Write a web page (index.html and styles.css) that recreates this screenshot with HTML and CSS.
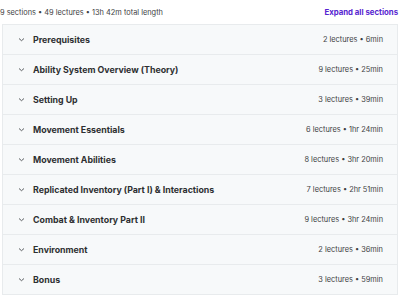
FILE: index.html
```html
<!DOCTYPE html>
<html lang="en">
<head>
    <meta charset="UTF-8">
    <title>Course content</title>
    <link rel="stylesheet" href="styles.css">
</head>
<body>
    <div class="curriculum">
        <div class="curriculum-header">
            <span class="summary">9 sections • 49 lectures • 13h 42m total length</span>
            <button class="expand-btn">Expand all sections</button>
        </div>

        <div class="sections">
            <div class="section">
                <svg class="chevron" viewBox="0 0 7 7"><path d="M1 2.5 3.5 4.7 6 2.5"/></svg>
                <span class="title">Prerequisites</span>
                <span class="meta">2 lectures • 6min</span>
            </div>
            <div class="section">
                <svg class="chevron" viewBox="0 0 7 7"><path d="M1 2.5 3.5 4.7 6 2.5"/></svg>
                <span class="title">Ability System Overview (Theory)</span>
                <span class="meta">9 lectures • 25min</span>
            </div>
            <div class="section">
                <svg class="chevron" viewBox="0 0 7 7"><path d="M1 2.5 3.5 4.7 6 2.5"/></svg>
                <span class="title">Setting Up</span>
                <span class="meta">3 lectures • 39min</span>
            </div>
            <div class="section">
                <svg class="chevron" viewBox="0 0 7 7"><path d="M1 2.5 3.5 4.7 6 2.5"/></svg>
                <span class="title">Movement Essentials</span>
                <span class="meta">6 lectures • 1hr 24min</span>
            </div>
            <div class="section">
                <svg class="chevron" viewBox="0 0 7 7"><path d="M1 2.5 3.5 4.7 6 2.5"/></svg>
                <span class="title">Movement Abilities</span>
                <span class="meta">8 lectures • 3hr 20min</span>
            </div>
            <div class="section">
                <svg class="chevron" viewBox="0 0 7 7"><path d="M1 2.5 3.5 4.7 6 2.5"/></svg>
                <span class="title">Replicated Inventory (Part I) &amp; Interactions</span>
                <span class="meta">7 lectures • 2hr 51min</span>
            </div>
            <div class="section">
                <svg class="chevron" viewBox="0 0 7 7"><path d="M1 2.5 3.5 4.7 6 2.5"/></svg>
                <span class="title">Combat &amp; Inventory Part II</span>
                <span class="meta">9 lectures • 3hr 24min</span>
            </div>
            <div class="section">
                <svg class="chevron" viewBox="0 0 7 7"><path d="M1 2.5 3.5 4.7 6 2.5"/></svg>
                <span class="title">Environment</span>
                <span class="meta">2 lectures • 36min</span>
            </div>
            <div class="section">
                <svg class="chevron" viewBox="0 0 7 7"><path d="M1 2.5 3.5 4.7 6 2.5"/></svg>
                <span class="title">Bonus</span>
                <span class="meta">3 lectures • 59min</span>
            </div>
        </div>
    </div>
</body>
</html>
```

FILE: styles.css
```css
body {
    margin: 0;
    padding: 0;
    background: #fff;
    font-family: "Inter", "Liberation Sans", Arial, sans-serif;
    color: #2d2f31;
}

/* Page wrapper */
.curriculum {
    padding: 0 2px;
}

/* Header row */
.curriculum-header {
    display: flex;
    justify-content: space-between;
    align-items: center;
    height: 24px;
    margin-left: -2px;
}

.summary {
    font-size: 7.4px;
    color: #3e4143;
}

.expand-btn {
    border: none;
    background: none;
    padding: 0;
    font-family: inherit;
    font-size: 7.8px;
    font-weight: 700;
    color: #5624d0;
    cursor: pointer;
}

/* Section list */
.sections {
    border: 1px solid #e8ebed;
}

.section {
    display: flex;
    align-items: center;
    height: 29px;
    padding: 0 14px 0 15px;
    background: #f7f9fa;
    border-bottom: 1px solid #e8ebed;
}

.section:last-child {
    border-bottom: none;
}

.chevron {
    flex: none;
    width: 7px;
    height: 7px;
    margin-right: 8px;
    fill: none;
    stroke: #4a4d50;
    stroke-width: 0.9;
}

.title {
    flex: 1;
    font-size: 8.8px;
    font-weight: 700;
    color: #2d2f31;
}

.meta {
    font-size: 7.4px;
    color: #3e4143;
}
```
